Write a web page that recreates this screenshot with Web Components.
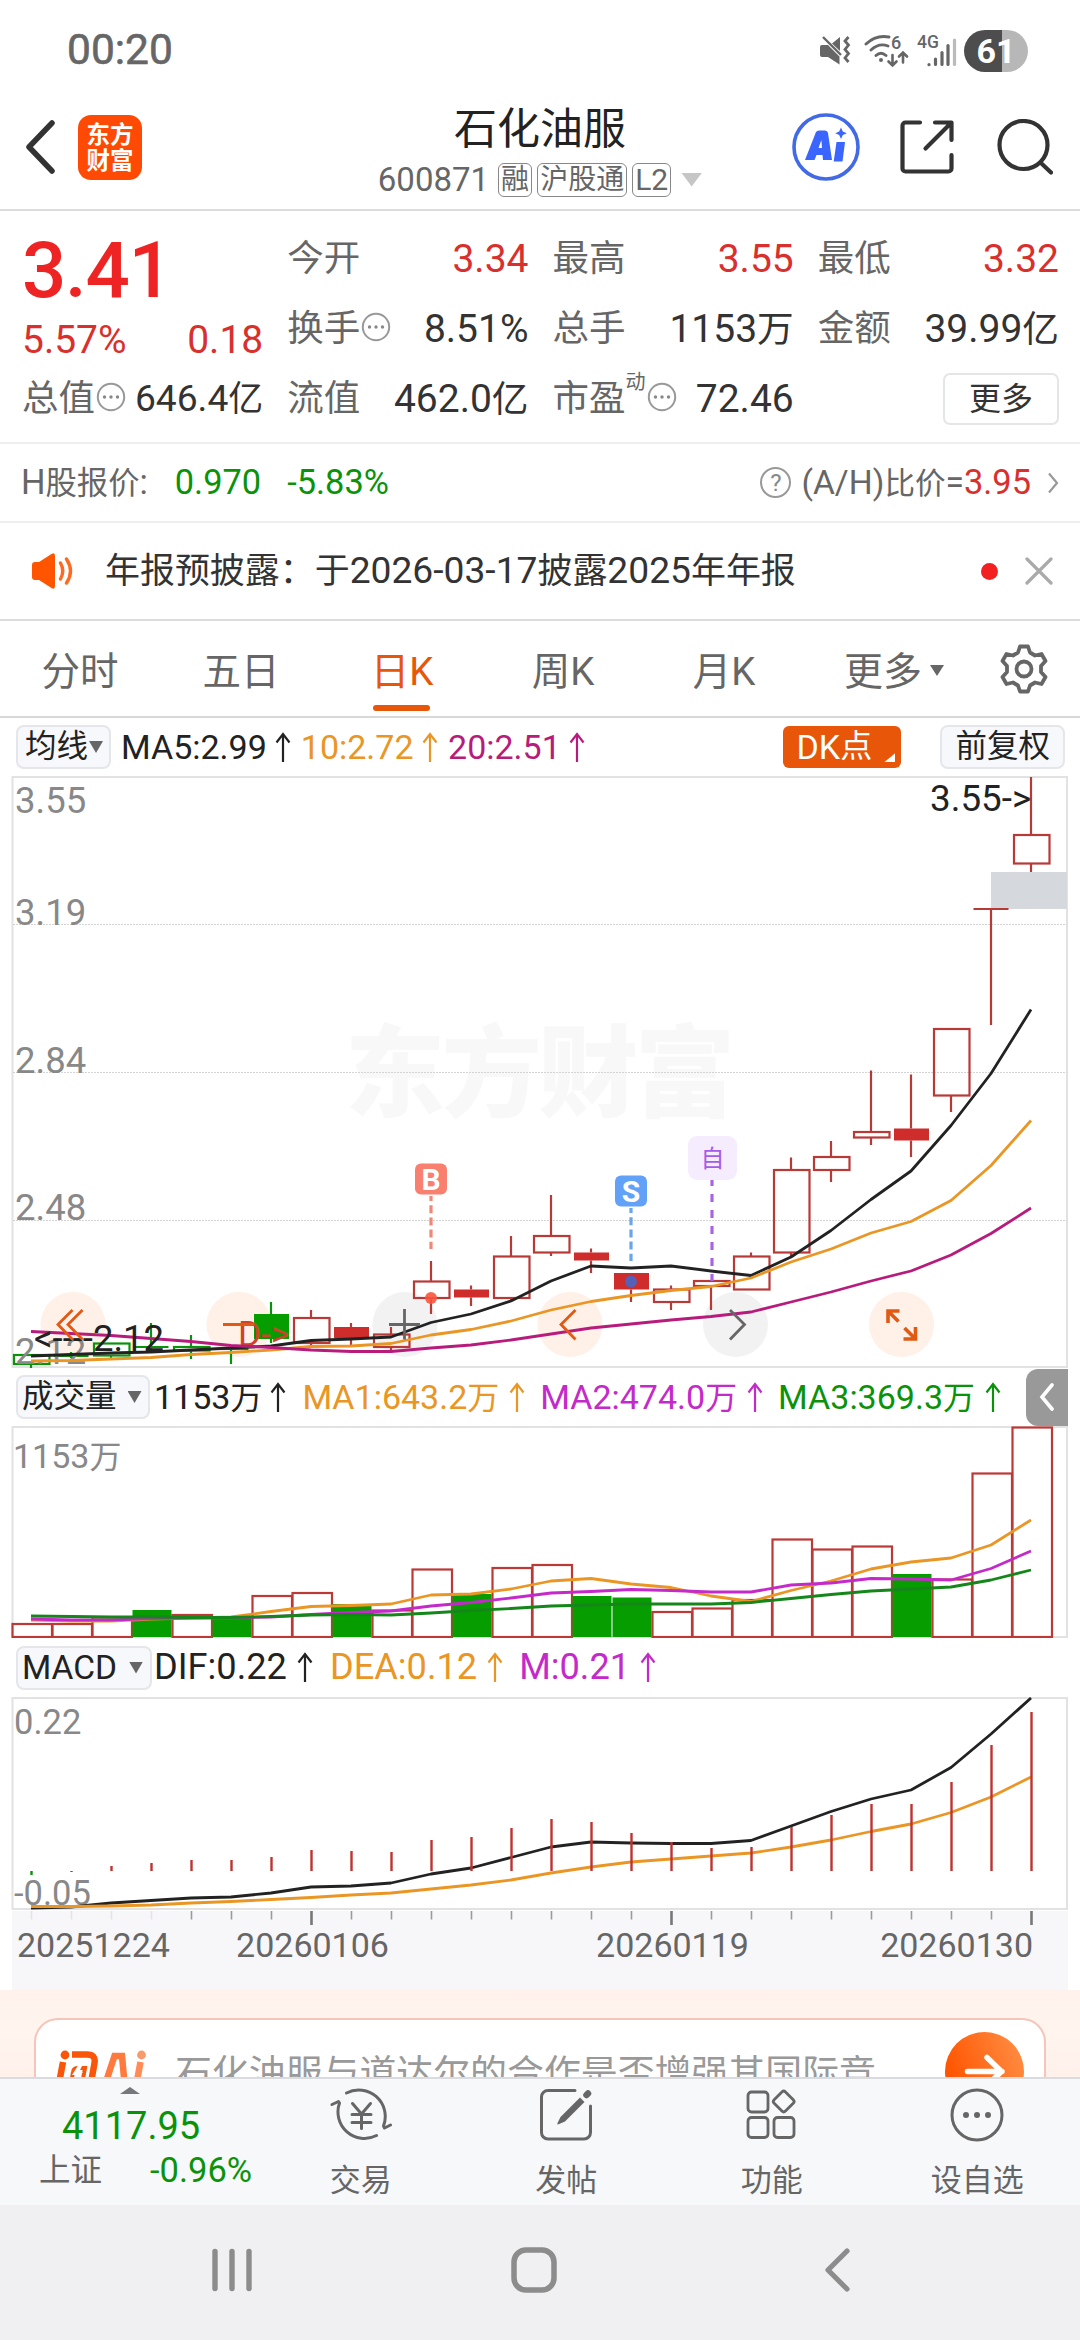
<!DOCTYPE html>
<html lang="zh-CN">
<head>
<meta charset="utf-8">
<title>石化油服 600871</title>
<style>
  body {
    margin: 0;
    width: 1080px;
    height: 2340px;
    overflow: hidden;
    background: #fff;
    color: #333;
    font-family: Roboto, "Noto Sans CJK SC", sans-serif;
    font-size: 34px;
    line-height: 1;
  }
</style>
</head>
<body>
<stock-page></stock-page>

<script>
const GREEN = "#0a930a";
const UP_TEXT = "#d9302e";
const ORANGE = "#ea9624";
const BRAND = "#e8560a";

// Chinese glyphs run a little smaller than the digits beside them
const mix = (text) =>
  text.replace(/[\u4e00-\u9fff：]+/g, '<span class="cn">$&</span>');

class BaseElement extends HTMLElement {
  constructor() {
    super();
    this.attachShadow({ mode: "open" });
  }

  connectedCallback() {
    this.shadowRoot.innerHTML = `
      <style>
        :host { display: block; box-sizing: border-box; white-space: nowrap; }
        * { box-sizing: border-box; }
        svg { display: block; flex: none; }
        .cn { font-size: .94em; }
        ${this.styles()}
      </style>
      ${this.render()}
    `;
  }

  styles() {
    return "";
  }

  render() {
    return "<slot></slot>";
  }
}

const ICONS = {
  back: [30, 54, `<path d="M27 3 4 27l23 24" fill="none" stroke="#333" stroke-width="5.5" stroke-linecap="round" stroke-linejoin="round"/>`],
  share: [54, 54, `<g fill="none" stroke="#333" stroke-width="4.2" stroke-linecap="round" stroke-linejoin="round"><path d="M20 2.5H5.5a3 3 0 0 0-3 3V48.5a3 3 0 0 0 3 3H48.5a3 3 0 0 0 3-3V35"/><path d="M35 2.5H51.5V20M51 3 25.5 28.5"/></g>`],
  search: [56, 56, `<g fill="none" stroke="#333" stroke-width="4.2" stroke-linecap="round"><circle cx="26.5" cy="26" r="24"/><path d="m44.5 44.5 9.5 9"/></g>`],
  ai: [68, 68, `<circle cx="34" cy="34" r="32" fill="none" stroke="#426ae6" stroke-width="3.6"/><g fill="#3a66ff"><path fill-rule="evenodd" d="M24 19q1-1.5 3-1.5h6q2.5 0 3 2.5l4 27H31l-.5-5h-6L22.5 47H13ZM26.5 35h3.5l-.6-8Z"/><path d="M44.5 29H53l-2.5 19.5h-8.800Z"/><path d="m49 14.500 1.800 4 4 1.800-4 1.800-1.800 4-1.800-4-4-1.800 4-1.800Z"/></g>`],
  dots: [30, 30, `<circle cx="15" cy="15" r="13.2" fill="none" stroke="#999" stroke-width="2"/><g fill="#888"><circle cx="8.5" cy="15" r="1.7"/><circle cx="15" cy="15" r="1.7"/><circle cx="21.5" cy="15" r="1.7"/></g>`],
  chevron: [12, 22, `<path d="m2 1.5 8 9.5-8 9.5" fill="none" stroke="#999" stroke-width="2.2"/>`],
  speaker: [42, 36, `<path d="M0 12q0-3 3-3h4L19.5 1q3.5-2 3.5 2v30q0 4-3.500 2L7 27H3q-3 0-3-3Z" fill="#ff5500"/><path d="M28.5 10q4.500 8 0 16M34.500 6q8 12 0 24" fill="none" stroke="#ff6a22" stroke-width="3.4" stroke-linecap="round"/>`],
  close: [28, 28, `<path d="m2 2 24 24M26 2 2 26" stroke="#aaa" stroke-width="3.2" stroke-linecap="round"/>`],
  gear: [50, 50, `<g fill="none" stroke="#666" stroke-width="3.8" stroke-linejoin="round"><path d="M21 2.5h8l2 6 5 3 6.5-1.5 4 7-4.5 5v6l4.5 5-4 7-6.5-1.5-5 3-2 6h-8l-2-6-5-3L7.5 40l-4-7L8 28v-6l-4.500-5 4-7L14 11.500l5-3Z"/><circle cx="25" cy="25" r="7.5"/></g>`],
  up: [16, 31, `<path d="M8 30V2M1.5 10.5 8 2l6.5 8.5" fill="none" stroke="currentColor" stroke-width="2.2"/>`],
  trade: [62, 56, `<g fill="none" stroke="#666" stroke-width="3" stroke-linecap="round" stroke-linejoin="round"><path d="M16.5 6A26.5 26.5 0 0 1 53.5 39L54.5 41l6-3M46.5 48.5A26.5 26.5 0 0 1 9.5 16L8.5 14.5l-6.5 3"/><path d="m22.5 16.5 9 10.5 9-10.500M22 27.500h19M22 35.500h19M31.500 27.500v14"/></g>`],
  post: [54, 54, `<path d="M36 2.5H9a6.5 6.5 0 0 0-6.5 6.5V44.5a6.5 6.5 0 0 0 6.5 6.5H45a6.5 6.5 0 0 0 6.5-6.5V18" fill="none" stroke="#666" stroke-width="3" stroke-linecap="round"/><path d="m41 9.5 4.5 4.5-19.5 19.5-7 3q-1 0-.5-1.500l3-6Z" fill="#666"/><path d="m47.5 7 1.5-1.5" stroke="#666" stroke-width="6.5" stroke-linecap="round"/>`],
  grid: [52, 52, `<g fill="none" stroke="#666" stroke-width="2.8"><rect x="2" y="3" width="20" height="20" rx="3.5"/><rect x="2" y="28.5" width="20" height="20" rx="3.5"/><rect x="28" y="28.5" width="20" height="20" rx="3.5"/><rect x="29.7" y="4.5" width="16" height="16" rx="2.5" transform="rotate(45 37.7 12.5)"/></g>`],
  more: [54, 54, `<circle cx="27" cy="27" r="25" fill="none" stroke="#666" stroke-width="3"/><g fill="#666"><circle cx="16" cy="27" r="3"/><circle cx="27" cy="27" r="3"/><circle cx="38" cy="27" r="3"/></g>`],
  recents: [40, 44, `<path d="M3 3.5v37M20 3.5v37M37 3.5v37" stroke="#8c8c8c" stroke-width="5.4" stroke-linecap="round"/>`],
  home: [46, 46, `<rect x="3" y="3" width="40" height="40" rx="12" fill="none" stroke="#8c8c8c" stroke-width="5.5"/>`],
  previous: [26, 44, `<path d="M23 3 4 22l19 19" fill="none" stroke="#8c8c8c" stroke-width="5.2" stroke-linecap="round" stroke-linejoin="round"/>`],
  go: [79, 79, `<defs><linearGradient id="g" x1="0" y1=".7" x2="1" y2=".3"><stop offset=".1" stop-color="#ff5500"/><stop offset="1" stop-color="#ff8c42"/></linearGradient></defs><circle cx="39.5" cy="39.5" r="39.5" fill="url(#g)"/><path d="M22.5 39.5H57M42 25.5l14.5 14-14.5 14" fill="none" stroke="#fff" stroke-width="5.5" stroke-linecap="round" stroke-linejoin="round"/>`],
  mute: [31, 31, `<path d="M2 10h6L19.5 21.5V29.5L8 22H2q-2 0-2-2v-8q0-2 2-2ZM20 2v14L12 8.5Z" fill="#666"/><path d="m3 2 18 18" stroke="#666" stroke-width="2.4"/><path d="m28.5 2-3.5 4 3.5 4-3.5 4.5 3.5 4-3.500 4.500 3.500 4" fill="none" stroke="#666" stroke-width="2.8"/>`],
  wifi: [46, 34, `<g fill="none" stroke="#666" stroke-width="2.9" stroke-linecap="round"><path d="M2 10Q12 .5 25 3M7 16Q15 8.5 24 12M12 21.5q5-4.500 10 0"/><path d="M28.5 21v10.5m-4-4 4 4 4-4M39 28.5V18.5m-4 4 4-4 4 4" stroke-width="2.6"/></g><circle cx="17" cy="26" r="2" fill="#666"/><text x="27" y="15" font-size="18" font-weight="500" fill="#666">6</text>`],
  signal: [40, 34, `<g stroke="#666" stroke-width="3.2" stroke-linecap="round"><path d="M12 30.5v.2M18.5 25v5.5M25 18.5v12M31 11.5v19"/><path d="M37.5 6v24.5" stroke="#bbb"/></g><text x="0" y="13.5" font-size="17.5" font-weight="500" fill="#666">4G</text>`],
};

customElements.define(
  "ui-icon",
  class extends BaseElement {
    styles() {
      return ":host { flex: none; }";
    }

    render() {
      const [w, h, body] = ICONS[this.getAttribute("name")];
      return `<svg width="${w}" height="${h}" viewBox="0 0 ${w} ${h}">${body}</svg>`;
    }
  }
);

customElements.define(
  "ui-caret",
  class extends BaseElement {
    styles() {
      return `
        :host {
          width: 14px;
          height: 12px;
          flex: none;
          background: #666;
          clip-path: polygon(0 0, 100% 0, 50% 100%);
        }
      `;
    }
  }
);

customElements.define(
  "status-bar",
  class extends BaseElement {
    styles() {
      return `
        :host { display: flex; align-items: center; height: 100px; padding: 1px 52px 0 67px; color: #666; }
        .time { font-size: 42.5px; -webkit-text-stroke: .6px #666; }
        .icons { display: flex; align-items: center; margin-left: auto; }
        .battery {
          width: 64px; height: 42px; line-height: 43px; border-radius: 21px; margin-left: 7px;
          background: linear-gradient(90deg, #4d4d4d 60%, #b7b7b7 60%);
          color: #fff; font-size: 34px; font-weight: 700; text-align: center;
        }
      `;
    }

    render() {
      return `
        <span class="time">00:20</span>
        <div class="icons">
          <ui-icon name="mute"></ui-icon>
          <ui-icon name="wifi" style="margin-left:13px"></ui-icon>
          <ui-icon name="signal" style="margin-left:7px"></ui-icon>
          <div class="battery">61</div>
        </div>
      `;
    }
  }
);

customElements.define(
  "title-bar",
  class extends BaseElement {
    styles() {
      return `
        :host {
          display: grid; grid-template-columns: 330px 1fr 330px; align-items: center;
          height: 111px; border-bottom: 2px solid #dcdcdc;
        }
        .left { display: flex; align-items: center; padding: 0 0 15px 25px; }
        .logo {
          width: 64px; height: 65px; margin-left: 23px; padding-top: 7px; border-radius: 13px;
          background: #ff4a05; color: #fff; text-align: center;
          font-size: 23.5px; font-weight: 700; line-height: 26px;
        }
        .mid { text-align: center; }
        .name { font-size: 43px; line-height: 50px; color: #222; margin-top: -6px; }
        .code { display: flex; align-items: center; justify-content: center; height: 40px; margin-top: 6px; font-size: 33px; color: #666; }
        .tag {
          height: 34px; line-height: 31px; padding: 0 2px; margin-left: 5px;
          border: 1.5px solid #888; border-radius: 6px; font-size: 28px;
        }
        .tag:first-of-type { margin-left: 9px; }
        .latin { font-size: 30px; }
        ui-caret { width: 21px; height: 14px; background: #c6c6c6; margin-left: 10px; }
        .right { display: flex; align-items: center; padding: 0 0 15px 42px; }
      `;
    }

    render() {
      return `
        <div class="left">
          <ui-icon name="back"></ui-icon>
          <div class="logo">东方<br>财富</div>
        </div>
        <div class="mid">
          <div class="name">石化油服</div>
          <div class="code">600871<span class="tag">融</span><span class="tag">沪股通</span><span class="tag latin">L2</span><ui-caret></ui-caret></div>
        </div>
        <div class="right">
          <ui-icon name="ai"></ui-icon>
          <ui-icon name="share" style="margin-left:40px"></ui-icon>
          <ui-icon name="search" style="margin-left:43px"></ui-icon>
        </div>
      `;
    }
  }
);

customElements.define(
  "quote-cell",
  class extends BaseElement {
    styles() {
      return `
        :host { display: flex; align-items: center; height: 70px; font-size: 39px; }
        .label { font-size: 36.5px; color: #666; }
        sup { font-size: 20px; line-height: 20px; align-self: flex-start; margin-top: 8px; color: #666; }
        ui-icon { margin: -5px 0 0 1px; }
        .value { margin-left: auto; color: ${this.hasAttribute("up") ? UP_TEXT : "#333"}; }
        :host([tight]) .value { font-size: 37.2px; }
      `;
    }

    render() {
      const sup = this.getAttribute("sup");
      return `
        <span class="label">${this.getAttribute("label")}</span>
        ${sup ? `<sup>${sup}</sup>` : ""}
        ${this.hasAttribute("info") ? '<ui-icon name="dots"></ui-icon>' : ""}
        <span class="value">${mix(this.textContent)}</span>
      `;
    }
  }
);

customElements.define(
  "quote-panel",
  class extends BaseElement {
    styles() {
      return `
        :host {
          display: grid; grid-template-columns: repeat(4, 1fr); column-gap: 24px; align-content: start;
          height: 233px; padding: 13px 21px 0 22px; border-bottom: 2px solid #eee;
        }
        .price { grid-row: span 2; color: ${UP_TEXT}; font-size: 39px; }
        .last { font-size: 78px; line-height: 78px; margin: 8px 0 0; color: #ee2424; font-weight: 500; letter-spacing: -1.3px; }
        .change { display: flex; justify-content: space-between; margin-top: 11px; }
        .more {
          align-self: center; justify-self: end; width: 116px; height: 52px; line-height: 48px;
          border: 2px solid #e4e5e7; border-radius: 7px; text-align: center; font-size: 32px;
        }
      `;
    }

    render() {
      return `
        <div class="price">
          <div class="last">3.41</div>
          <div class="change"><span>5.57%</span><span>0.18</span></div>
        </div>
        <quote-cell label="今开" up>3.34</quote-cell>
        <quote-cell label="最高" up>3.55</quote-cell>
        <quote-cell label="最低" up>3.32</quote-cell>
        <quote-cell label="换手" info>8.51%</quote-cell>
        <quote-cell label="总手">1153万</quote-cell>
        <quote-cell label="金额">39.99亿</quote-cell>
        <quote-cell label="总值" info tight>646.4亿</quote-cell>
        <quote-cell label="流值">462.0亿</quote-cell>
        <quote-cell label="市盈" sup="动" info>72.46</quote-cell>
        <div class="more">更多</div>
      `;
    }
  }
);

customElements.define(
  "h-share-row",
  class extends BaseElement {
    styles() {
      return `
        :host {
          display: flex; align-items: center; height: 79px; padding: 0 21px 0 21px;
          border-bottom: 2px solid #eee; color: #666; font-size: 34.4px;
        }
        .cn { font-size: .91em; }
        .down { color: ${GREEN}; }
        .help {
          width: 31px; height: 31px; line-height: 28px; margin: 0 10px 0 auto; border: 2px solid #999;
          border-radius: 50%; text-align: center; font-size: 24px; color: #888;
        }
        .ratio { font-size: 33.6px; }
        .up { font-size: 34.4px; color: ${UP_TEXT}; }
        ui-icon { margin-left: 16px; }
      `;
    }

    render() {
      return `
        <span>${mix("H股报价:")}</span>
        <span class="down" style="margin-left:27px">0.970</span>
        <span class="down" style="margin-left:26px">-5.83%</span>
        <span class="help">?</span>
        <span class="ratio">${mix("(A/H)比价=")}<span class="up">3.95</span></span>
        <ui-icon name="chevron"></ui-icon>
      `;
    }
  }
);

customElements.define(
  "news-bar",
  class extends BaseElement {
    styles() {
      return `
        :host {
          display: flex; align-items: center; height: 98px; padding: 0 27px 0 32px;
          border-bottom: 2px solid #dcdcdc; font-size: 37.2px;
        }
        .text { margin-left: 31px; }
        .dot { width: 17px; height: 17px; margin: 0 27px 0 auto; border-radius: 50%; background: #f22020; }
      `;
    }

    render() {
      return `
        <ui-icon name="speaker"></ui-icon>
        <span class="text">${mix("年报预披露：于2026-03-17披露2025年年报")}</span>
        <span class="dot"></span>
        <ui-icon name="close"></ui-icon>
      `;
    }
  }
);

customElements.define(
  "period-tabs",
  class extends BaseElement {
    styles() {
      return `
        :host { display: flex; align-items: center; height: 97px; border-bottom: 2px solid #d8d8d8; font-size: 38.5px; color: #666; }
        .tab { position: relative; display: flex; align-items: center; justify-content: center; width: 161px; height: 100%; padding: 8px 1px 0 0; }
        .active { color: ${BRAND}; }
        .active::after {
          content: ""; position: absolute; bottom: 5px; left: 51px; width: 57px; height: 6px;
          border-radius: 3px; background: ${BRAND};
        }
        .menu { font-size: 39px; padding-left: 6px; }
        ui-caret { margin: 0 -12px 4px 8px; height: 11px; }
        ui-icon { margin: 0 auto 0 33px; }
      `;
    }

    render() {
      const tabs = ["分时", "五日", "日K", "周K", "月K"].map(
        (t) => `<span class="tab ${t === "日K" ? "active" : ""}">${t}</span>`
      );
      return `
        ${tabs.join("")}
        <span class="tab menu">更多<ui-caret></ui-caret></span>
        <ui-icon name="gear"></ui-icon>
      `;
    }
  }
);

customElements.define(
  "legend-button",
  class extends BaseElement {
    styles() {
      return `
        :host {
          display: flex; align-items: center; height: 44px; padding: 0 7px;
          border: 2px solid #e4e6ea; border-radius: 8px; background: #f7f8fb; font-size: 31.5px; color: #222;
        }
      `;
    }
  }
);

customElements.define(
  "legend-value",
  class extends BaseElement {
    styles() {
      return `
        :host { display: flex; align-items: center; font-size: var(--legend-size, 34px); }
        ui-icon { margin: 1px 0 0 var(--arrow-gap, 10px); }
      `;
    }

    render() {
      return `<span>${mix(this.textContent)}</span><ui-icon name="up"></ui-icon>`;
    }
  }
);

customElements.define(
  "chart-legend",
  class extends BaseElement {
    styles() {
      return ":host { display: flex; align-items: center; padding: 0 0 0 16px; }";
    }
  }
);

// Every chart keeps page coordinates in its viewBox, one session each 40px
const x = (i) => 31 + i * 40;
const line = (ys, color, width = 2.8) =>
  `<polyline points="${ys.map((y, i) => `${x(i)},${y}`).join(" ")}" fill="none" stroke="${color}" stroke-width="${width}" stroke-linejoin="round"/>`;
const frame = (top, bottom) =>
  `<rect x="12.5" y="${top}" width="1054.5" height="${bottom - top}" fill="none" stroke="#e2e2e2" stroke-width="2"/>`;

// [kind, high, top, bottom, low]; r/g hollow, R/G filled, rf/gf flat
const CANDLES = [
  ["g", 1354, 1355, 1364, 1368],
  ["gf", 1352, 1356, 1356, 1358],
  ["g", 1343, 1343.5, 1355.5, 1358],
  ["gf", 1323, 1347, 1347, 1352],
  ["g", 1335, 1347, 1350.5, 1359],
  ["gf", 1349, 1349, 1349, 1364],
  ["G", 1302, 1314, 1339, 1343],
  ["r", 1310, 1318, 1343, 1346],
  ["R", 1323, 1327, 1338, 1347],
  ["r", 1327, 1334.5, 1347, 1350],
  ["r", 1261, 1281.5, 1298, 1314],
  ["R", 1285.5, 1289.5, 1297.5, 1306],
  ["r", 1236, 1256.5, 1298, 1301],
  ["r", 1195, 1236, 1252.5, 1256],
  ["R", 1248.5, 1252.5, 1260.5, 1273],
  ["R", 1273, 1273, 1289.5, 1302],
  ["r", 1285.5, 1289.5, 1302, 1310],
  ["r", 1281, 1281, 1286, 1310],
  ["r", 1252.5, 1256.5, 1289.5, 1289.5],
  ["r", 1157.5, 1170, 1252.5, 1256],
  ["r", 1141, 1157, 1170, 1182],
  ["r", 1070.5, 1132, 1137.5, 1145],
  ["R", 1074.5, 1128.5, 1140.5, 1157],
  ["r", 1029, 1029, 1095.5, 1112],
  ["rf", 909, 909, 909, 1025],
  ["r", 777, 835, 863.5, 872],
];

const candle = ([kind, high, top, bottom, low], i) => {
  const cx = x(i);
  const color = kind[0].toLowerCase() === "g" ? GREEN : "#b83a37";
  const wick = `<path d="M${cx} ${high}V${top}M${cx} ${bottom}V${low}" stroke="${color}" stroke-width="2.2"/>`;
  if (kind[1] === "f") {
    return `${wick}<path d="M${cx - 17.5} ${top}h35" stroke="${color}" stroke-width="2.2"/>`;
  }
  if (kind === "R" || kind === "G") {
    return `${wick}<rect x="${cx - 17}" y="${top}" width="35" height="${bottom - top}" fill="${kind === "R" ? "#cf2c2c" : "#069d00"}"/>`;
  }
  return `${wick}<rect x="${cx - 17}" y="${top}" width="35.5" height="${bottom - top}" fill="none" stroke="${color}" stroke-width="2.2"/>`;
};

customElements.define(
  "k-line-chart",
  class extends BaseElement {
    styles() {
      return `
        .scale { font-size: 36.5px; fill: #888; }
        .watermark { font-size: 100px; font-weight: 900; fill: #f8f8f8; }
        .flag { font-size: 30px; font-weight: 700; fill: #fff; text-anchor: middle; }
      `;
    }

    render() {
      const scale = [["3.55", 813], ["3.19", 924.5], ["2.84", 1073], ["2.48", 1220], ["2.12", 1364]];
      const buttons = [73, 239, 405, 570, 735.5, 901.5];
      return `
        <svg width="1080" height="592" viewBox="0 776 1080 592">
          ${frame(777, 1367)}
          <text class="watermark" x="345" y="1109" textLength="390">东方财富</text>
          <path d="M13 924.5H1067M13 1072.5H1067M13 1220.5H1067" stroke="#d4d4d4" stroke-dasharray="2 1"/>
          ${buttons.map((cx, i) => `<circle cx="${cx}" cy="1324.5" r="32.5" fill="${i === 2 || i === 4 ? "#f2f2f3" : "#fff0e8"}"/>`).join("")}
          <rect x="991" y="872" width="76" height="37" fill="#d5d8dd"/>
          ${CANDLES.map(candle).join("")}
          ${scale.map(([t, y]) => `<text class="scale" x="15" y="${y}">${t}</text>`).join("")}
          <text x="238" y="1345.5" font-size="35" fill="#d0402c">D-&gt;</text>
          ${line([1356, 1354.5, 1353, 1352, 1350, 1348, 1346, 1340.5, 1339, 1337, 1322.5, 1314, 1301, 1281, 1266, 1268, 1266, 1271, 1275.5, 1257, 1230.5, 1199.5, 1171, 1125.5, 1073.5, 1009.5], "#222")}
          ${line([1361, 1360.5, 1359, 1357.5, 1354.5, 1352.5, 1350, 1346.5, 1346, 1343.5, 1335, 1329.5, 1321, 1310, 1301.5, 1295.5, 1290.5, 1286.5, 1278, 1262, 1249, 1233, 1221.5, 1200.5, 1165.5, 1120.5], ORANGE)}
          ${line([1331.5, 1333.5, 1335.5, 1338.5, 1341.5, 1345.5, 1347.5, 1350, 1351.5, 1351.5, 1348, 1345, 1340, 1334, 1328, 1324, 1320, 1316.5, 1312, 1302, 1292, 1281, 1271, 1255, 1233.5, 1208], "#b71c7c")}
          <text x="930" y="810.5" font-size="36.8" fill="#222">3.55-&gt;</text>
          <text x="34" y="1350.5" font-size="36.5" fill="#222">&lt;----2.12</text>
          <g fill="none" stroke="#e05a14" stroke-width="2.8">
            <path d="M72.5 1310 58 1324.5l14.5 15M82.5 1310 68 1324.5l14.5 15M223 1324.5h31M575.5 1310 561 1324.5l14.5 15"/>
            <path d="M888 1323V1311H899.5M888.5 1311.5 898.5 1321.5M915.5 1327V1339H903.5M915 1338.5 904.5 1328" stroke-width="3.6"/>
          </g>
          <path d="M389 1324.5h31M404.5 1309v30.5M730 1310 744.5 1324.5l-14.5 15" fill="none" stroke="#666" stroke-width="2.8"/>
          <path d="M431 1196V1249" stroke="#ee8877" stroke-width="3.2" stroke-dasharray="8 4.2" stroke-dashoffset="3"/>
          <circle cx="431" cy="1298" r="6" fill="#f8553d" opacity=".9"/>
          <rect x="415" y="1163.5" width="32" height="31" rx="6" fill="#f97f6f"/>
          <text class="flag" x="431" y="1189.5">B</text>
          <path d="M631 1208V1261" stroke="#6aa5ea" stroke-width="3.2" stroke-dasharray="8 4.2" stroke-dashoffset="3"/>
          <circle cx="631" cy="1281.5" r="6" fill="#5560b8"/>
          <rect x="615" y="1175.5" width="32" height="31" rx="6" fill="#62a1f8"/>
          <text class="flag" x="631" y="1201.5">S</text>
          <path d="M712 1180V1281" stroke="#a964e6" stroke-width="3.2" stroke-dasharray="8 8" stroke-dashoffset="2"/>
          <rect x="688" y="1136" width="49" height="44" rx="9" fill="#f5ecfe"/>
          <text x="712.5" y="1167" font-size="24" fill="#a55ce6" text-anchor="middle">自</text>
        </svg>
      `;
    }
  }
);

const VOLUMES = [
  1624, 1624, 1617.5, -1610, 1615, -1617, 1596, 1593, -1604, 1610.5, 1569.5, -1594, 1568,
  1565, -1596, -1597.5, 1612, 1608.5, 1600, 1539.5, 1549.5, 1546.5, -1574, 1579.5, 1473.5, 1427.5,
];

customElements.define(
  "volume-chart",
  class extends BaseElement {
    render() {
      // negative entries are the down sessions
      const bars = VOLUMES.map((v, i) => {
        const left = 12.5 + i * 40;
        return v < 0
          ? `<rect x="${left}" y="${-v}" width="39" height="${1637 + v}" fill="#069d00"/>`
          : `<rect x="${left}" y="${v}" width="39.5" height="${1637 - v}" fill="none" stroke="#bd3936" stroke-width="2.2"/>`;
      });
      return `
        <svg width="1080" height="212" viewBox="0 1426 1080 212">
          ${frame(1427, 1637)}
          <text x="13" y="1467.5" font-size="34" fill="#888">1153<tspan font-size="32">万</tspan></text>
          ${bars.join("")}
          ${line([1620, 1621, 1621, 1619, 1618, 1617, 1611.5, 1606.5, 1605.5, 1604, 1595, 1594, 1589, 1581, 1578.5, 1584, 1587.5, 1596, 1601.5, 1590.5, 1581, 1569, 1562, 1558, 1545, 1520], ORANGE)}
          ${line([1619, 1620, 1620, 1618.5, 1618, 1618, 1617, 1614.5, 1612.5, 1611, 1606, 1602.5, 1598, 1593, 1591.5, 1589.5, 1590.5, 1592, 1592, 1585, 1583, 1578.5, 1579, 1580, 1568.5, 1551], "#c42ac9")}
          ${line([1616, 1616.5, 1617, 1617, 1617.5, 1617.5, 1616.5, 1615, 1614.5, 1615, 1613, 1610.5, 1608.5, 1606, 1605, 1604, 1604, 1604, 1602.5, 1598.5, 1594.5, 1591, 1589, 1587, 1580, 1570], "#14861a")}
        </svg>
      `;
    }
  }
);

const MACD_BARS = [
  1875, 1872, 1866, 1863, 1860, 1860, 1857, 1850, 1851, 1852, 1840, 1837, 1828, 1819, 1822,
  1833, 1842, 1848, 1847, 1827, 1815, 1804, 1804, 1782, 1745, 1712,
];

customElements.define(
  "macd-chart",
  class extends BaseElement {
    render() {
      return `
        <svg width="1080" height="214" viewBox="0 1697 1080 214">
          ${frame(1698, 1909)}
          <text x="14" y="1734" font-size="34.5" fill="#888">0.22</text>
          <text x="14" y="1905" font-size="34.5" fill="#888">-0.05</text>
          ${line([1908, 1907, 1903, 1900.5, 1898, 1897, 1893, 1887, 1886, 1883, 1874, 1868, 1857.5, 1847, 1842, 1843, 1843.5, 1843.5, 1840.5, 1826, 1811.5, 1799, 1790, 1767.5, 1734, 1698], "#222")}
          ${line([1906.5, 1906.5, 1906, 1905, 1903, 1901.5, 1899.5, 1897.5, 1895, 1893, 1889, 1885, 1880, 1873, 1867, 1862, 1859, 1856, 1853, 1847, 1840, 1831.5, 1824, 1812.5, 1797, 1777], ORANGE)}
          ${MACD_BARS.map((y, i) => `<path d="M${x(i) + 0.5} 1871V${y}" stroke="${i < 2 ? GREEN : "#bd3330"}" stroke-width="2.4"/>`).join("")}
        </svg>
      `;
    }
  }
);

customElements.define(
  "date-axis",
  class extends BaseElement {
    styles() {
      return "text { font-size: 34px; fill: #666; }";
    }

    render() {
      let ticks = "";
      for (let i = 0; i < 26; i++) {
        const major = i % 9 === 7;
        ticks += `<path d="M${x(i) + 0.5} 1911v${major ? 14 : 8.5}" stroke="${i < 4 ? "#e4e4e8" : major ? "#777" : "#999"}" stroke-width="${major ? 2.6 : 1.6}"/>`;
      }
      return `
        <svg width="1080" height="79" viewBox="0 1911 1080 79">
          <rect x="12" y="1911" width="1056" height="79" fill="#f7f7fa"/>
          ${ticks}
          <text x="17" y="1956.5">20251224</text>
          <text x="312.5" y="1956.5" text-anchor="middle">20260106</text>
          <text x="672.5" y="1956.5" text-anchor="middle">20260119</text>
          <text x="1033" y="1956.5" text-anchor="end">20260130</text>
        </svg>
      `;
    }
  }
);

customElements.define(
  "ask-bar",
  class extends BaseElement {
    styles() {
      return `
        :host { height: 87px; padding: 28px 34px 0; overflow: hidden; background: linear-gradient(#fff2ed, #fff4ee 50%, #fff0ea); }
        .card {
          display: flex; align-items: flex-start; height: 120px; padding: 12px 20px 0 20px;
          border: 2px solid #f5c5ba; border-radius: 24px; background: #fff;
        }
        svg { margin-top: 18px; }
        .hint { margin: 20px 0 0 29px; font-size: 36.9px; line-height: 44px; color: #999; }
        ui-icon { margin-left: auto; }
      `;
    }

    render() {
      return `
        <div class="card">
          <svg width="90" height="44" viewBox="0 0 90 44">
            <circle cx="9" cy="5" r="4.4" fill="#f9560a"/>
            <circle cx="85.5" cy="5" r="4.4" fill="#f79a6c"/>
            <g fill="none" stroke="#f9560a" stroke-width="6.5">
              <path d="M7 12 1 44M16 4.5H31Q40 4.5 38.5 13L33 44"/>
              <path d="m15 34 2-12q.5-4 5-4h7l-3 16Z" stroke-width="4"/>
            </g>
            <path d="M23 14 16 25h4l-2 6 9-9h-4l3-6Z" fill="#fff"/>
            <path d="m46 44 12.5-38H66L69.5 44M53 34H67" fill="none" stroke="#ff7a3c" stroke-width="6.5"/>
            <path d="M84.5 12 78.5 44" stroke="#ff8c57" stroke-width="6.5"/>
          </svg>
          <div class="hint">石化油服与道达尔的合作是否增强其国际竞</div>
          <ui-icon name="go"></ui-icon>
        </div>
      `;
    }
  }
);

customElements.define(
  "bar-item",
  class extends BaseElement {
    styles() {
      return `
        :host { display: flex; flex-direction: column; align-items: center; width: 205.5px; padding-top: 8px; font-size: 31px; color: #666; }
        .icon { display: flex; align-items: center; height: 56px; }
        .label { margin-top: 22px; }
      `;
    }

    render() {
      return `
        <div class="icon"><ui-icon name="${this.getAttribute("icon")}"></ui-icon></div>
        <div class="label"><slot></slot></div>
      `;
    }
  }
);

customElements.define(
  "bottom-bar",
  class extends BaseElement {
    styles() {
      return `
        :host { display: flex; height: 128px; border-top: 2px solid #d9dbde; background: #f7f8fa; }
        .index { width: 258px; padding-top: 8px; color: ${GREEN}; }
        ui-caret { width: 20px; height: 7px; margin-left: 120px; clip-path: polygon(50% 0, 100% 100%, 0 100%); background: #77787c; }
        .points { margin: 13px 0 0 62px; font-size: 38px; }
        .row { display: flex; align-items: center; margin-top: 8px; padding-left: 39px; font-size: 34.5px; }
        .name { font-size: 31.5px; color: #666; margin-right: 48px; }
      `;
    }

    render() {
      return `
        <div class="index">
          <ui-caret></ui-caret>
          <div class="points">4117.95</div>
          <div class="row"><span class="name">上证</span><span>-0.96%</span></div>
        </div>
        <bar-item icon="trade">交易</bar-item>
        <bar-item icon="post">发帖</bar-item>
        <bar-item icon="grid">功能</bar-item>
        <bar-item icon="more">设自选</bar-item>
      `;
    }
  }
);

customElements.define(
  "nav-bar",
  class extends BaseElement {
    styles() {
      return ":host { display: flex; align-items: center; height: 135px; padding-left: 212px; padding-bottom: 5px; background: #f0f0f2; }";
    }

    render() {
      return `
        <ui-icon name="recents"></ui-icon>
        <ui-icon name="home" style="margin-left:259px"></ui-icon>
        <ui-icon name="previous" style="margin-left:267px"></ui-icon>
      `;
    }
  }
);

customElements.define(
  "stock-page",
  class extends BaseElement {
    styles() {
      return `
        .average { --arrow-gap: 8.5px; height: 58px; padding-right: 15px; }
        .volume { --arrow-gap: 10px; height: 58px; }
        .macd { --arrow-gap: 10px; --legend-size: 36.2px; height: 59px; }
        .dk {
          display: flex; align-items: center; position: relative; width: 118px; height: 42px; margin-left: auto; padding-left: 13px;
          border-radius: 6px; background: ${BRAND}; color: #fff; font-size: 34px;
        }
        .dk::after {
          content: ""; position: absolute; right: 6px; bottom: 6px; width: 11px; height: 9px;
          background: #fff; clip-path: polygon(100% 0, 100% 100%, 0 100%);
        }
        .fold {
          display: flex; align-items: center; justify-content: center; width: 42px; height: 57px;
          margin: 0 12px 0 auto; border-radius: 12px 0 0 12px; background: #999;
        }
      `;
    }

    render() {
      return `
        <status-bar></status-bar>
        <title-bar></title-bar>
        <quote-panel></quote-panel>
        <h-share-row></h-share-row>
        <news-bar></news-bar>
        <period-tabs></period-tabs>
        <chart-legend class="average">
          <legend-button style="width:95px">均线<ui-caret style="margin-left:1px"></ui-caret></legend-button>
          <legend-value style="margin-left:10px;color:#222">MA5:2.99</legend-value>
          <legend-value style="margin-left:9.5px;color:${ORANGE}">10:2.72</legend-value>
          <legend-value style="margin-left:10px;color:#b71c7c">20:2.51</legend-value>
          <div class="dk">${mix("DK点")}</div>
          <legend-button style="margin-left:39px;padding:0 13px">前复权</legend-button>
        </chart-legend>
        <k-line-chart></k-line-chart>
        <chart-legend class="volume">
          <legend-button style="width:134px;padding:0 4px">成交量<ui-caret style="margin-left:11px"></ui-caret></legend-button>
          <legend-value style="--arrow-gap:8px;margin-left:4px;color:#222">1153万</legend-value>
          <legend-value style="margin-left:16px;color:${ORANGE}">MA1:643.2万</legend-value>
          <legend-value style="margin-left:15px;color:#c42ac9">MA2:474.0万</legend-value>
          <legend-value style="margin-left:15px;color:${GREEN}">MA3:369.3万</legend-value>
          <div class="fold"><svg width="16" height="28" viewBox="0 0 16 28"><path d="M13 2 3 14l10 12" fill="none" stroke="#fff" stroke-width="3.6" stroke-linecap="round"/></svg></div>
        </chart-legend>
        <volume-chart></volume-chart>
        <chart-legend class="macd">
          <legend-button style="width:136px;padding:0 4px;font-size:33.5px">MACD<ui-caret style="margin-left:12px"></ui-caret></legend-button>
          <legend-value style="margin-left:2px;color:#222">DIF:0.22</legend-value>
          <legend-value style="margin-left:17px;color:${ORANGE}">DEA:0.12</legend-value>
          <legend-value style="margin-left:16px;color:#c42ac9">M:0.21</legend-value>
        </chart-legend>
        <macd-chart></macd-chart>
        <date-axis></date-axis>
        <ask-bar></ask-bar>
        <bottom-bar></bottom-bar>
        <nav-bar></nav-bar>
      `;
    }
  }
);
</script>
</body>
</html>
